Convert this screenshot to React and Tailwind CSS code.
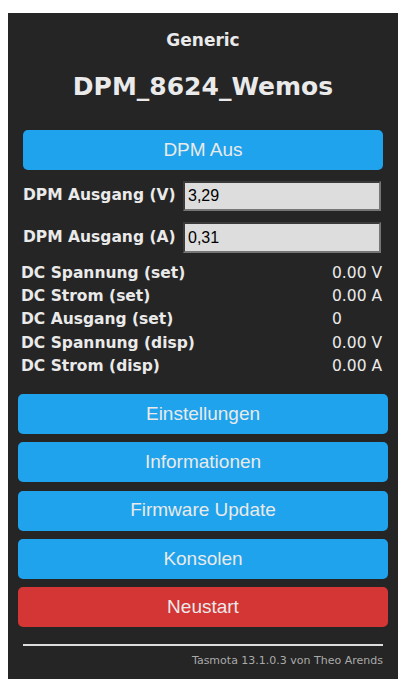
import React from "react";

const rows = [
  ["DC Spannung (set)", "0.00 V"],
  ["DC Strom (set)", "0.00 A"],
  ["DC Ausgang (set)", "0"],
  ["DC Spannung (disp)", "0.00 V"],
  ["DC Strom (disp)", "0.00 A"],
];

const menu = ["Einstellungen", "Informationen", "Firmware Update", "Konsolen"];

const Btn = ({ label, red }) => (
  <button
    className={`w-full h-[40px] rounded-[5px] text-[19px] text-[#eaeaea] font-['Liberation_Sans',Arial,sans-serif] ${red ? "bg-[#d43535]" : "bg-[#1fa3ec]"}`}
  >
    {label}
  </button>
);

const Field = ({ label, value, h }) => (
  <div className="flex items-center mt-[11px]">
    <span className="font-bold text-[15.5px] w-[160px] shrink-0 whitespace-nowrap">{label}</span>
    <input
      readOnly
      value={value}
      className={`w-[198px] min-w-0 ${h} bg-[#dddddd] text-black text-[16px] px-[3px] border-2 border-t-[#3a3a3a] border-l-[#3a3a3a] border-r-[#767676] border-b-[#767676] font-['Liberation_Sans',Arial,sans-serif] outline-none`}
    />
  </div>
);

export default function App() {
  return (
    <div className="bg-white min-h-[689px] pt-[13px] px-[8px] font-['DejaVu_Sans',Verdana,sans-serif]">
      <div className="bg-[#252525] h-[666px] text-[#eaeaea] px-[10px]">
        <div className="text-center font-bold text-[17px] pt-[17px] leading-[20px]">Generic</div>
        <div className="text-center font-bold text-[25px] pt-[22px] leading-[30px]">DPM_8624_Wemos</div>

        <div className="px-[5px] pt-[28px]">
          <Btn label="DPM Aus" />
          <Field label="DPM Ausgang (V)" value="3,29" h="h-[30px]" />
          <Field label="DPM Ausgang (A)" value="0,31" h="h-[31px]" />
        </div>

        <div className="pt-[9px] px-[3px] text-[15.5px] leading-[23.2px]">
          {rows.map(([k, v]) => (
            <div key={k} className="flex whitespace-nowrap">
              <span className="font-bold w-[311px]">{k}</span>
              <span>{v}</span>
            </div>
          ))}
        </div>

        <div className="flex flex-col gap-[8.25px] pt-[16px]">
          {menu.map((m) => (
            <Btn key={m} label={m} />
          ))}
          <Btn label="Neustart" red />
        </div>

        <div className="mx-[5px] mt-[17px] border-t-2 border-[#dddddd]" />
        <div className="text-right text-[11px] text-[#aaaaaa] px-[5px] pt-[7px]">
          Tasmota 13.1.0.3 von Theo Arends
        </div>
      </div>
    </div>
  );
}
